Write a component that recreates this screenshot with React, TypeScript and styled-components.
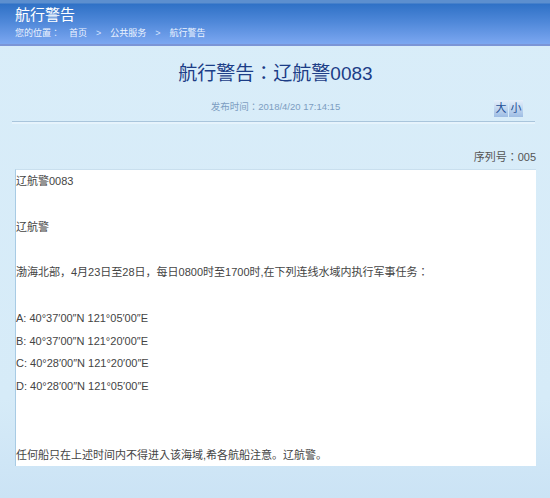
import React from 'react'
import styled, { createGlobalStyle } from 'styled-components'

const GlobalStyle = createGlobalStyle`
  html, body {
    margin: 0;
    padding: 0;
  }
  body {
    width: 550px;
    height: 498px;
    overflow: hidden;
    background: linear-gradient(to bottom, #d9edf9 0%, #d6ebf8 80%, #cbe3f5 100%);
    font-family: Arial, "Liberation Sans", "Noto Sans CJK JP", sans-serif;
  }
`

const Header = styled.div`
  height: 46px;
  padding: 5px 0 0 15px;
  box-sizing: border-box;
  background: linear-gradient(to bottom, #5c8fcf 0px, #5c8fcf 3px, #2f71c6 4px, #4f88d9 22px, #80aaf3 46px);
  border-bottom: 2px solid #7b95d6;
  color: #fff;
`

const SiteTitle = styled.div`
  font-size: 15px;
  line-height: 20px;
  height: 21px;
`

const Crumbs = styled.div`
  display: flex;
  gap: 9px;
  font-size: 9px;
  line-height: 14px;
  color: #eef4ff;

  span.sep {
    color: #d6e4ff;
  }
`

const Main = styled.div`
  padding: 0 14px 0 15px;
`

const Title = styled.h1`
  margin: 15px 0 0;
  text-align: center;
  font-size: 19px;
  font-weight: normal;
  line-height: 26px;
  color: #1c3d87;
`

const InfoRow = styled.div`
  display: grid;
  grid-template-columns: 1fr auto 1fr;
  align-items: center;
  height: 22px;
  margin-top: 8px;
`

const PubDate = styled.div`
  grid-column: 2;
  font-size: 9.5px;
  color: #7c9dc1;
`

const SizeButtons = styled.div`
  grid-column: 3;
  display: flex;
  justify-content: flex-end;
  gap: 1px;
  margin-right: 13px;
  padding-top: 5px;
`

const SizeButton = styled.button`
  width: 14px;
  height: 17px;
  padding: 0;
  border: none;
  background: linear-gradient(to bottom, #e6f0fb, #9ebde4);
  color: #1f4f95;
  font-family: inherit;
  font-size: 11px;
  line-height: 17px;
  cursor: pointer;
`

const Rule = styled.div`
  margin: 4px 1px 0 -3px;
  height: 2px;
  border-top: 1px solid #a9c5dc;
  background: #e6f3fc;
`

const SerialRow = styled.div`
  margin-top: 23px;
  text-align: right;
  font-size: 11px;
  line-height: 20px;
  color: #555;
`

const Content = styled.div`
  margin-top: 2px;
  height: 297px;
  box-sizing: border-box;
  background: #fff;
  border-left: 1px solid #a8cbe4;
  border-top: 1px solid #c9dfee;
  color: #444;
  font-size: 11px;
  line-height: 22.8px;
`

const Line = styled.p`
  margin: 0;
  min-height: 22.8px;
`

const lines = [
  '辽航警0083',
  '',
  '辽航警',
  '',
  '渤海北部，4月23日至28日，每日0800时至1700时,在下列连线水域内执行军事任务：',
  '',
  'A: 40°37′00″N 121°05′00″E',
  'B: 40°37′00″N 121°20′00″E',
  'C: 40°28′00″N 121°20′00″E',
  'D: 40°28′00″N 121°05′00″E',
  '',
  '',
  '任何船只在上述时间内不得进入该海域,希各航船注意。辽航警。',
]

export default function App() {
  return (
    <>
      <GlobalStyle />
      <Header>
        <SiteTitle>航行警告</SiteTitle>
        <Crumbs>
          <span>您的位置：</span>
          <span>首页</span>
          <span className="sep">&gt;</span>
          <span>公共服务</span>
          <span className="sep">&gt;</span>
          <span>航行警告</span>
        </Crumbs>
      </Header>
      <Main>
        <Title>航行警告：辽航警0083</Title>
        <InfoRow>
          <PubDate>发布时间：2018/4/20 17:14:15</PubDate>
          <SizeButtons>
            <SizeButton>大</SizeButton>
            <SizeButton>小</SizeButton>
          </SizeButtons>
        </InfoRow>
        <Rule />
        <SerialRow>序列号：005</SerialRow>
        <Content>
          {lines.map((t, i) => (
            <Line key={i}>{t}</Line>
          ))}
        </Content>
      </Main>
    </>
  )
}
